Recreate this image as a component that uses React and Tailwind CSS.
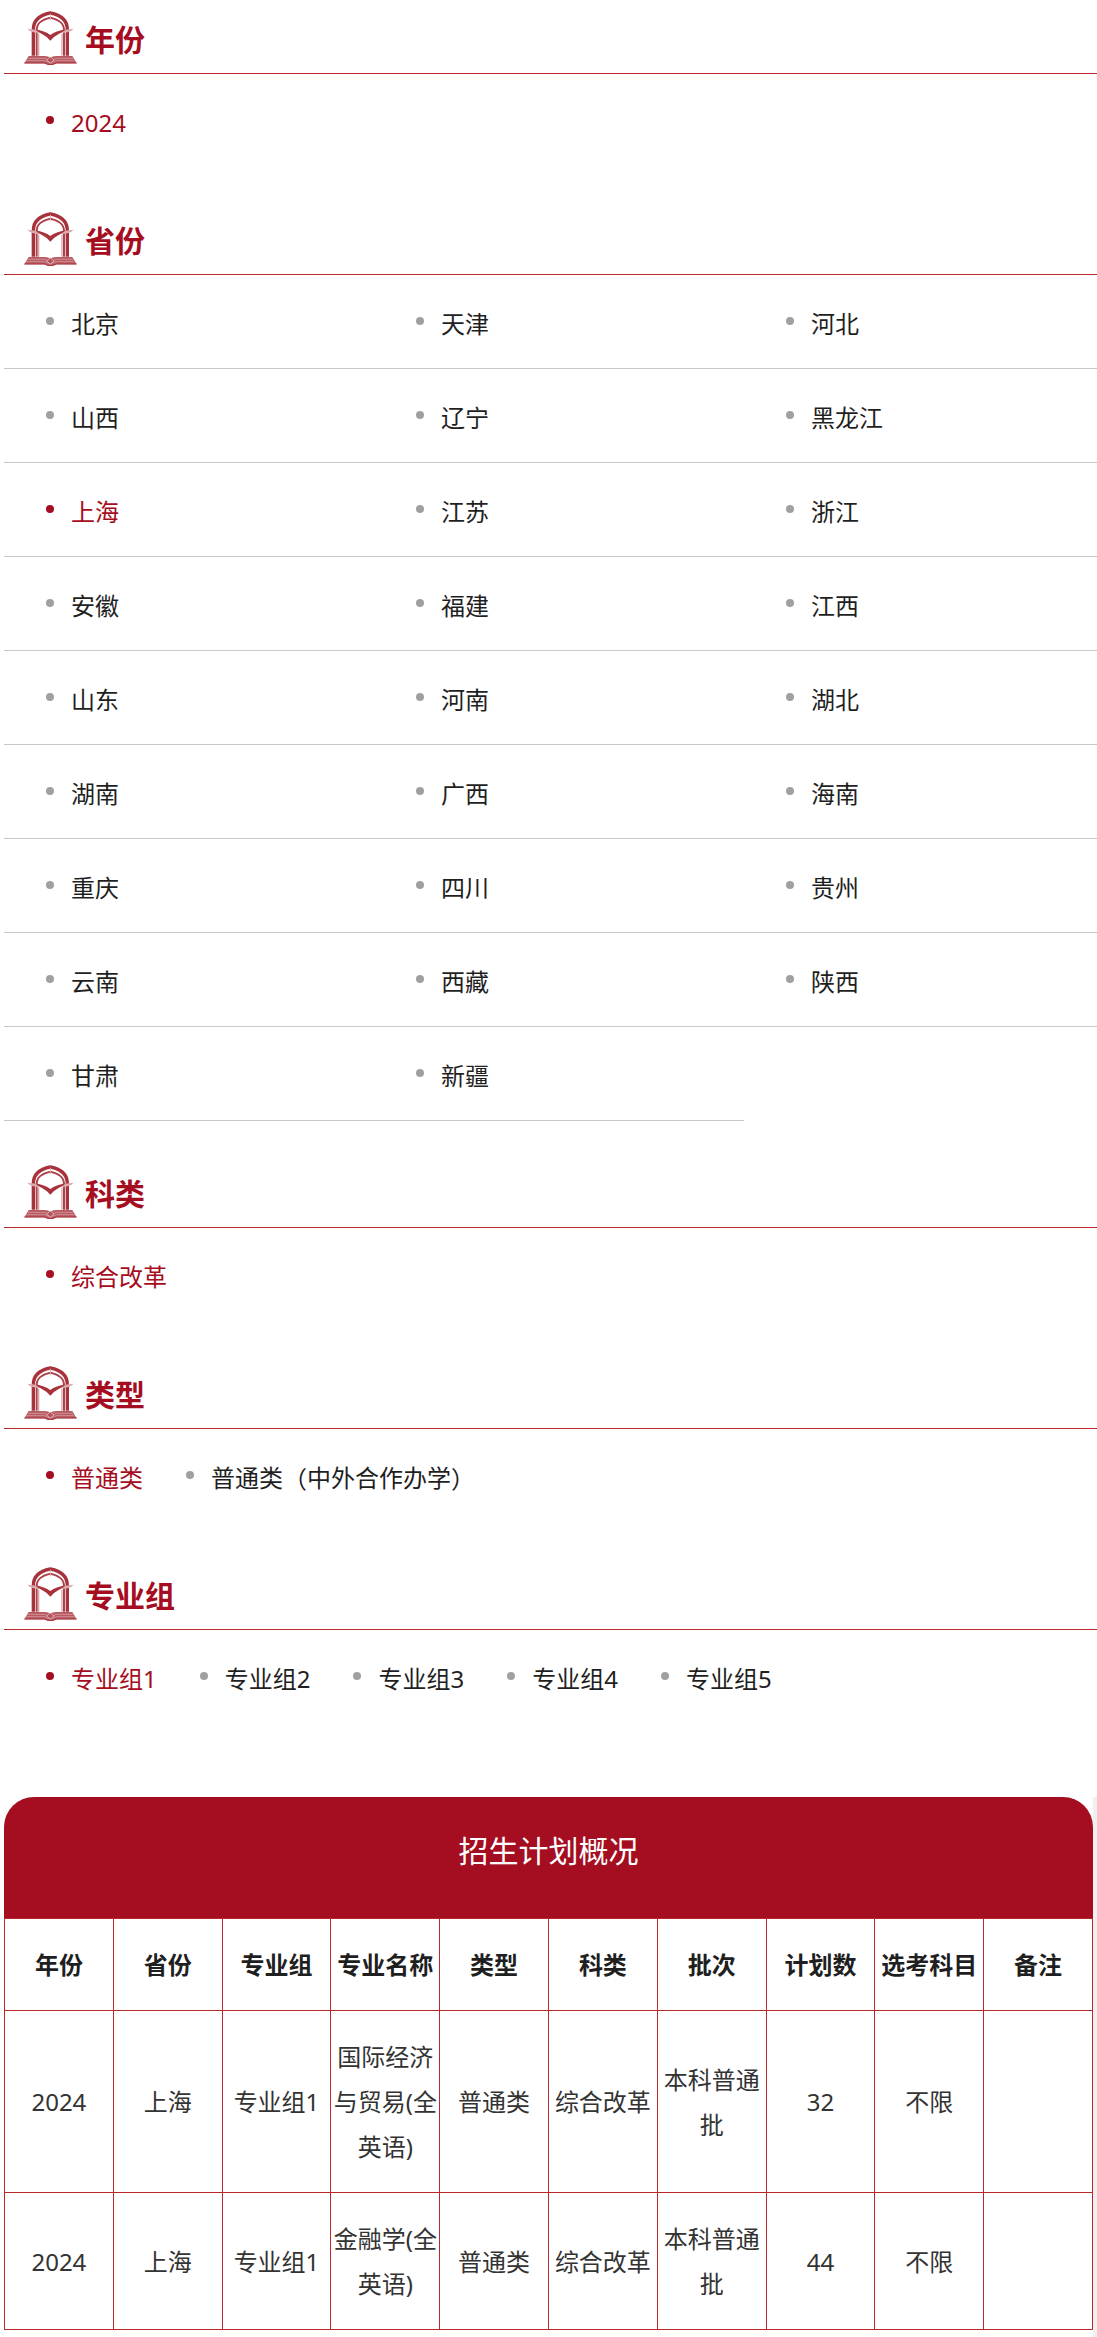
const provinces = [
  '北京', '天津', '河北',
  '山西', '辽宁', '黑龙江',
  '上海', '江苏', '浙江',
  '安徽', '福建', '江西',
  '山东', '河南', '湖北',
  '湖南', '广西', '海南',
  '重庆', '四川', '贵州',
  '云南', '西藏', '陕西',
  '甘肃', '新疆',
];

const groups = ['专业组1', '专业组2', '专业组3', '专业组4', '专业组5'];

const columns = ['年份', '省份', '专业组', '专业名称', '类型', '科类', '批次', '计划数', '选考科目', '备注'];

const rows = [
  ['2024', '上海', '专业组1', '国际经济与贸易(全英语)', '普通类', '综合改革', '本科普通批', '32', '不限', ''],
  ['2024', '上海', '专业组1', '金融学(全英语)', '普通类', '综合改革', '本科普通批', '44', '不限', ''],
];

function ArchIcon() {
  return (
    <svg viewBox="0 0 159 162" className="h-[54px] w-[53px] shrink-0" fill="none" aria-hidden="true">
      {/* arch and pillars */}
      <path d="M28 134V56C28 26 46 12 79 6C112 12 130 26 130 56V134" stroke="#a8323b" strokeWidth="10" />
      <path d="M38 134V58C38 36 52 26 79 20C106 26 120 36 120 58V134" stroke="#ae424a" strokeWidth="6" />
      <path d="M44 134V68M114 134V68" stroke="#d9a5a9" strokeWidth="4" />
      <path d="M79 8V28" stroke="#e3b5b9" strokeWidth="3" />
      {/* bird */}
      <path d="M10 53L36 56L48 66Q22 66 10 53ZM149 53L123 56L111 66Q137 66 149 53Z" fill="#dca9ad" />
      <path d="M34 55Q62 60 79 72Q96 60 125 55Q114 66 104 69Q90 76 79 89Q68 76 54 69Q44 66 34 55Z" fill="#a8323b" />
      {/* open book */}
      <path d="M14 135H62Q74 135 79 140Q84 135 97 135H145L158 157H97Q90 162 79 162Q68 162 61 157H1Z" fill="#b85a62" />
      <path d="M11 142H62L79 150L97 142H147M7 149H62L79 156L97 149H151" stroke="#dca9ad" strokeWidth="2" />
      <path d="M1 156H62Q70 161 79 161Q88 161 97 156H158" stroke="#a8323b" strokeWidth="3" />
      <path d="M79 138L90 147L79 156L68 147Z" fill="#b5525a" stroke="#edd0d2" strokeWidth="2" />
    </svg>
  );
}

function FilterSection({ title, children }) {
  return (
    <section className="mb-[33px]">
      <h2 className="flex h-[74px] items-start gap-2 border-b border-[#b9292b] pt-[11px] pl-5 text-3xl leading-[58px] font-bold text-[#a50d21]">
        <ArchIcon />
        {title}
      </h2>
      {children}
    </section>
  );
}

function Option({ label, active, ruled }) {
  return (
    <li className={ruled ? 'border-b border-[#c8c8c8]' : 'pb-px'}>
      <a
        href="#"
        className={`flex h-[93px] pr-px pl-[42px] text-2xl leading-[98px] ${active ? 'text-[#a50d21]' : 'text-[#1f1f1f]'}`}
      >
        <span className={`mt-[42px] mr-[17px] size-2 shrink-0 rounded-full ${active ? 'bg-[#a50d21]' : 'bg-[#a0a0a0]'}`} />
        {label}
      </a>
    </li>
  );
}

// Centred full-width brackets
function Bracket({ children }) {
  return (
    <span lang="zh-TW" className="font-['Noto_Sans_CJK_TC',sans-serif]">
      {children}
    </span>
  );
}

export default function App() {
  return (
    <main className="overflow-x-hidden bg-white pl-1 font-['Noto_Sans','Noto_Sans_CJK_SC',sans-serif]">
      <FilterSection title="年份">
        <ul className="flex flex-wrap">
          <Option label="2024" active />
        </ul>
      </FilterSection>

      <FilterSection title="省份">
        <ul className="-mr-[17px] grid grid-cols-3">
          {provinces.map((name) => (
            <Option key={name} label={name} active={name === '上海'} ruled />
          ))}
        </ul>
      </FilterSection>

      <FilterSection title="科类">
        <ul className="flex flex-wrap">
          <Option label="综合改革" active />
        </ul>
      </FilterSection>

      <FilterSection title="类型">
        <ul className="flex flex-wrap">
          <Option label="普通类" active />
          <Option label={<>普通类<Bracket>（</Bracket>中外合作办学<Bracket>）</Bracket></>} />
        </ul>
      </FilterSection>

      <FilterSection title="专业组">
        <ul className="flex flex-wrap">
          {groups.map((name, i) => (
            <Option key={name} label={name} active={i === 0} />
          ))}
        </ul>
      </FilterSection>

      <div className="mt-[73px] border-r-4 border-[#f0f0f0] pb-2">
        <table className="w-full table-fixed border-collapse text-center text-2xl leading-[45px] text-[#333]">
          <caption className="h-[121px] rounded-t-[30px] bg-[#a50d21] text-3xl leading-[108px] text-white">
            招生计划概况
          </caption>
          <thead>
            <tr>
              {columns.map((name) => (
                <th key={name} className="border border-[#b9292b] py-[23px] font-bold text-[#1f1f1f]">
                  {name}
                </th>
              ))}
            </tr>
          </thead>
          <tbody>
            {rows.map((row, i) => (
              <tr key={i}>
                {row.map((cell, j) => (
                  <td key={j} className="border border-[#b9292b] py-[23px]">
                    {cell}
                  </td>
                ))}
              </tr>
            ))}
          </tbody>
        </table>
      </div>
    </main>
  );
}
